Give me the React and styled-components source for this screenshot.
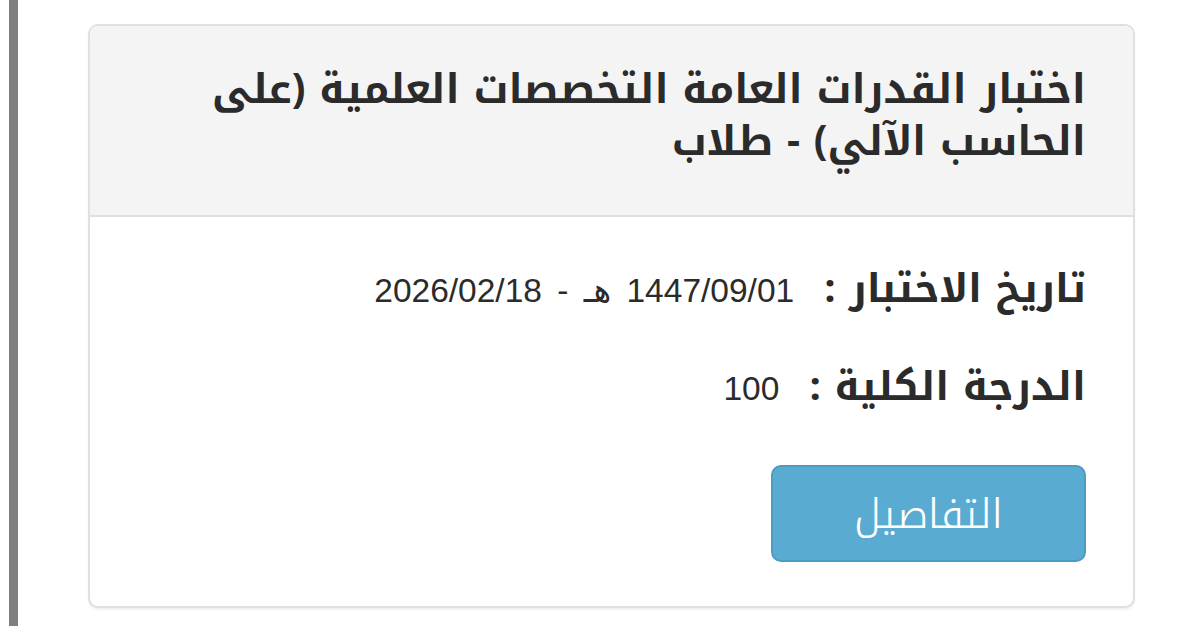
import React from "react";
import styled, { createGlobalStyle } from "styled-components";

const Global = createGlobalStyle`
  html, body { margin: 0; padding: 0; background: #fff; }
  body { font-family: "Noto Kufi Arabic", "Noto Sans Arabic", "DejaVu Sans", sans-serif; }
`;

const Page = styled.div`
  display: flex;
  height: 626px;
  overflow: hidden;
`;

const SideBar = styled.div`
  width: 9px;
  margin-left: 9px;
  background: #7f7f7f;
  flex-shrink: 0;
`;

const Content = styled.div`
  flex: 1;
  padding: 24px 45px 0 70px;
`;

const Card = styled.div`
  direction: rtl;
  width: 1047px;
  box-sizing: border-box;
  border: 2px solid #e0e0e0;
  border-radius: 10px;
  background: #fff;
  box-shadow: 0 2px 2px rgba(0, 0, 0, 0.06);
  overflow: hidden;
`;

const Header = styled.div`
  background: #f4f4f4;
  border-bottom: 2px solid #e0e0e0;
  padding: 38px 47px 47px 60px;
`;

const Title = styled.h2`
  margin: 0;
  font-size: 40.5px;
  line-height: 52px;
  font-weight: 700;
  color: #2b2b2b;
`;

const Body = styled.div`
  padding: 34px 47px 44px;
  display: flex;
  flex-direction: column;
  align-items: flex-start;
`;

const Row = styled.div`
  display: flex;
  align-items: baseline;
  gap: 30px;
  height: 98px;
`;

const Label = styled.span`
  font-size: 40px;
  font-weight: 700;
  color: #2b2b2b;
`;

const Value = styled.span`
  font-family: "Liberation Sans", Arial, "DejaVu Sans", sans-serif;
  font-size: 33.5px;
  word-spacing: 6px;
  color: #2b2b2b;
`;

const Button = styled.button`
  margin-top: 18px;
  width: 315px;
  height: 97px;
  background: #5aabd1;
  border: 2px solid #4a9cc3;
  border-radius: 10px;
  color: #fff;
  font-family: inherit;
  font-size: 41px;
  font-weight: 300;
  cursor: pointer;
  box-sizing: border-box;
`;

export default function App() {
  return (
    <>
      <Global />
      <Page>
        <SideBar />
        <Content>
          <Card>
            <Header>
              <Title>اختبار القدرات العامة التخصصات العلمية (على الحاسب الآلي) - طلاب</Title>
            </Header>
            <Body>
              <Row>
                <Label>تاريخ الاختبار :</Label>
                <Value>1447/09/01 هـ - 2026/02/18</Value>
              </Row>
              <Row>
                <Label>الدرجة الكلية :</Label>
                <Value>100</Value>
              </Row>
              <Button>التفاصيل</Button>
            </Body>
          </Card>
        </Content>
      </Page>
    </>
  );
}
